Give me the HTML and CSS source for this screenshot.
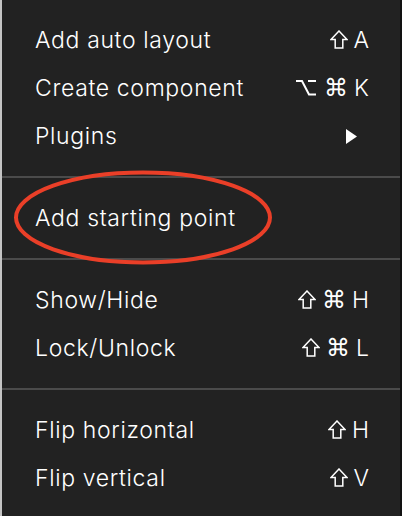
FILE: index.html
```html
<!DOCTYPE html>
<html>
<head>
<meta charset="utf-8">
<link rel="stylesheet" href="styles.css">
</head>
<body>
<div class="menu">
  <div class="section">
    <div class="row"><span class="label">Add auto layout</span><span class="keys"><svg class="shift" width="18" height="19" viewBox="0 0 18 19"><path d="M9 1 L17 9.5 L12.8 9.5 L12.8 18 L5.2 18 L5.2 9.5 L1 9.5 Z" fill="none" stroke="#fff" stroke-width="1.5"/></svg><span>A</span></span></div>
    <div class="row"><span class="label">Create component</span><span class="keys"><svg class="opt" width="20" height="17" viewBox="0 0 20 17"><path d="M0 2 H6 L13 15.5 H20 M12 2 H20" fill="none" stroke="#fff" stroke-width="2"/></svg><span class="sym">⌘</span><span>K</span></span></div>
    <div class="row"><span class="label">Plugins</span><span class="arrow"><svg width="11" height="15" viewBox="0 0 11 15"><path d="M0 0 L11 7.5 L0 15 Z" fill="#fff"/></svg></span></div>
  </div>
  <div class="section">
    <div class="row"><span class="label">Add starting point</span></div>
  </div>
  <div class="section">
    <div class="row"><span class="label">Show/Hide</span><span class="keys"><svg class="shift" width="18" height="19" viewBox="0 0 18 19"><path d="M9 1 L17 9.5 L12.8 9.5 L12.8 18 L5.2 18 L5.2 9.5 L1 9.5 Z" fill="none" stroke="#fff" stroke-width="1.5"/></svg><span class="sym">⌘</span><span>H</span></span></div>
    <div class="row"><span class="label">Lock/Unlock</span><span class="keys"><svg class="shift" width="18" height="19" viewBox="0 0 18 19"><path d="M9 1 L17 9.5 L12.8 9.5 L12.8 18 L5.2 18 L5.2 9.5 L1 9.5 Z" fill="none" stroke="#fff" stroke-width="1.5"/></svg><span class="sym">⌘</span><span>L</span></span></div>
  </div>
  <div class="section">
    <div class="row"><span class="label">Flip horizontal</span><span class="keys"><svg class="shift" width="18" height="19" viewBox="0 0 18 19"><path d="M9 1 L17 9.5 L12.8 9.5 L12.8 18 L5.2 18 L5.2 9.5 L1 9.5 Z" fill="none" stroke="#fff" stroke-width="1.5"/></svg><span>H</span></span></div>
    <div class="row"><span class="label">Flip vertical</span><span class="keys"><svg class="shift" width="18" height="19" viewBox="0 0 18 19"><path d="M9 1 L17 9.5 L12.8 9.5 L12.8 18 L5.2 18 L5.2 9.5 L1 9.5 Z" fill="none" stroke="#fff" stroke-width="1.5"/></svg><span>V</span></span></div>
  </div>
  <svg class="circle" width="402" height="516" viewBox="0 0 402 516">
    <ellipse cx="143" cy="217.5" rx="127" ry="45" fill="none" stroke="#ea3f28" stroke-width="4"/>
  </svg>
</div>
</body>
</html>
```

FILE: styles.css
```css
html, body {
  margin: 0;
  padding: 0;
}
body {
  width: 402px;
  height: 516px;
  overflow: hidden;
  background: #c4c4c4;
  font-family: Inter, "Noto Sans", sans-serif;
}
.menu {
  position: relative;
  margin-left: 2px;
  width: 398px;
  height: 516px;
  background: #222222;
  border-right: 2px solid #121212;
  color: #ffffff;
}
.section {
  padding: 16px 0;
  border-bottom: 2px solid #4b4b4b;
}
.section:last-of-type {
  border-bottom: none;
}
.row {
  height: 48px;
  display: flex;
  align-items: center;
  justify-content: space-between;
  padding: 0 31px 0 33px;
  font-size: 23px;
  font-weight: 350;
  letter-spacing: 0.65px;
}
.keys {
  display: flex;
  align-items: center;
  gap: 6px;
  letter-spacing: 0;
}
.shift {
  margin-top: -2px;
}
.opt {
  margin-right: 2px;
  margin-top: -2px;
}
.sym {
  font-family: "DejaVu Sans", sans-serif;
  font-size: 24px;
  font-weight: 400;
}
.arrow {
  display: flex;
  margin-right: 12px;
}
.circle {
  position: absolute;
  left: -2px;
  top: 0;
  pointer-events: none;
}
```
